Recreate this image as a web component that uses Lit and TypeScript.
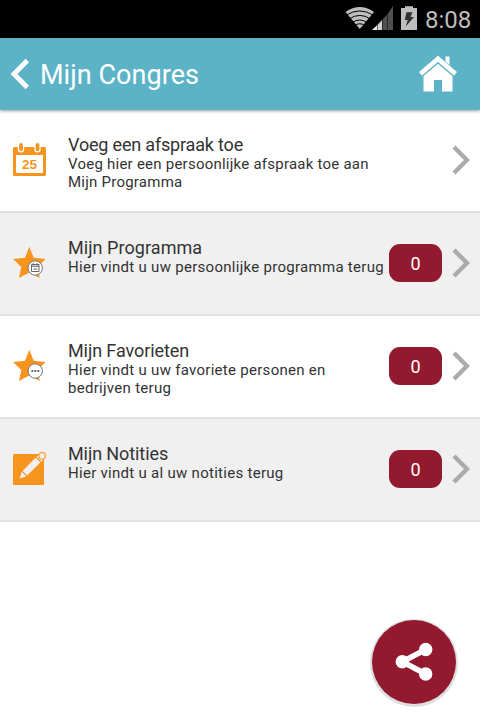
import { LitElement, html, svg, css } from "lit";
import { customElement } from "lit/decorators.js";
import { styleMap } from "lit/directives/style-map.js";

interface Item {
  icon: string;
  title: string;
  text: string;
  titleTracking: number;
  textTracking: number;
  count?: number;
}

const ITEMS: Item[] = [
  { icon: "calendar", title: "Voeg een afspraak toe", text: "Voeg hier een persoonlijke afspraak toe aan Mijn Programma", titleTracking: -0.18, textTracking: 0.235 },
  { icon: "program", title: "Mijn Programma", text: "Hier vindt u uw persoonlijke programma terug", titleTracking: 0.06, textTracking: 0.285, count: 0 },
  { icon: "favorite", title: "Mijn Favorieten", text: "Hier vindt u uw favoriete personen en bedrijven terug", titleTracking: -0.09, textTracking: 0.285, count: 0 },
  { icon: "note", title: "Mijn Notities", text: "Hier vindt u al uw notities terug", titleTracking: -0.09, textTracking: 0.285, count: 0 },
];

const star = svg`<path fill="#f7941e" d="M17.300 .8 21.700 11.700 33.800 13 25.300 21 27.800 32 17.300 26.400 6.900 32 9.300 21 1 13 13.100 11.700Z"/>
  <circle cx="23.200" cy="22" r="7.200" fill="#fff" stroke="#777" stroke-width="1"/>`;

const ICONS: Record<string, unknown> = {
  calendar: svg`<path fill="#f7941e" fill-rule="evenodd" d="M2.500 4H5.800V6.200A3.200 3.200 0 0 0 12.200 6.200V4H22.300V6.200A3.200 3.200 0 0 0 28.700 6.200V4H32.500Q34 4 34 5.500V31.500Q34 33 32.500 33H2.500Q1 33 1 31.500V5.500Q1 4 2.500 4ZM4 12V30H31V12Z"/>
    <path stroke="#f7941e" stroke-width="3.800" stroke-linecap="round" d="M9 1.900V6.200M25.500 1.900V6.200"/>
    <text x="17.500" y="25.500" text-anchor="middle" font-family="Liberation Sans, sans-serif" font-weight="700" font-size="13.500" fill="#f7941e">25</text>`,
  program: svg`${star}
    <path fill="none" stroke="#666" stroke-width="1" d="M19.500 18.500H27V25.500H19.500ZM19.500 20.300H27M21.300 17.200V19.500M25.200 17.200V19.500M21.300 23H25.300"/>`,
  favorite: svg`${star}
    <g fill="#555"><circle cx="20.300" cy="22" r="1.100"/><circle cx="23.300" cy="22" r="1.100"/><circle cx="26.300" cy="22" r="1.100"/></g>`,
  note: svg`<rect x="1" y="2" width="31" height="31" rx="1" fill="#f7941e"/>
    <path fill="#f0f0f0" d="M7.700 26.500 9.700 19.800 14.400 24.500ZM10.500 18.900 23.600 5.800 28.300 10.500 15.200 23.600ZM24.500 5 26.500 3 31.200 7.700 29.200 9.700Z"/>
    <circle cx="30" cy="3.900" r="3.300" fill="#f0f0f0" stroke="#f9a94b" stroke-width="1.500"/>`,
};

@customElement("menu-row")
export class MenuRow extends LitElement {
  static properties = { item: { attribute: false } };
  declare item: Item;

  static styles = css`
    :host {
      display: flex;
      box-sizing: border-box;
      height: 103px;
      border-bottom: 2px solid #e2e2e2;
      background: #fff;
      color: #333;
    }
    :host(:nth-child(even)) { background: #f0f0f0; }
    .icon { flex: none; width: 35px; height: 35px; margin: 33px 21px 0 12px; overflow: visible; }
    .copy { flex: none; width: 321px; padding-top: 24px; }
    .title { font-size: 18px; line-height: 21px; white-space: nowrap; }
    .text { font-size: 15px; line-height: 18px; }
    .badge {
      flex: none; width: 53px; height: 38px; margin-top: 31px;
      border-radius: 11px; background: #93192e; color: #fff;
      font-size: 18px; line-height: 40px; text-align: center;
    }
    .arrow { flex: none; width: 18px; height: 30px; margin: 35px 10px 0 auto; }
  `;

  render() {
    const { icon, title, text, titleTracking, textTracking, count } = this.item;
    return html`
      <svg class="icon" viewBox="0 0 35 35">${ICONS[icon]}</svg>
      <div class="copy">
        <div class="title" style=${styleMap({ letterSpacing: `${titleTracking}px` })}>${title}</div>
        <div class="text" style=${styleMap({ letterSpacing: `${textTracking}px` })}>${text}</div>
      </div>
      ${count === undefined ? "" : html`<div class="badge">${count}</div>`}
      <svg class="arrow" viewBox="0 0 18 30"><path d="M2 2 15 15 2 28" fill="none" stroke="#a9abad" stroke-width="4.400"/></svg>
    `;
  }
}

@customElement("app-root")
export class AppRoot extends LitElement {
  static styles = css`
    :host {
      display: block; position: relative; height: 728px; overflow: hidden;
      background: #fff; font-family: Roboto, sans-serif;
    }
    .status {
      display: flex; box-sizing: border-box; height: 38px; padding-right: 8px;
      justify-content: flex-end; background: #000; color: #bebebe;
    }
    .symbols { width: 74px; height: 38px; }
    .time { width: 47px; margin-left: 7px; font-size: 24px; line-height: 40px; white-space: nowrap; }
    .bar {
      position: relative; z-index: 1;
      display: flex; align-items: center; box-sizing: border-box; height: 72px;
      background: #5cb3c7; color: #fff; box-shadow: 0 1px 3px rgba(0, 0, 0, 0.4);
    }
    .back { width: 20px; height: 32px; margin-left: 10px; }
    .heading { margin: 1px 0 0 10px; font-size: 27px; line-height: 32px; font-weight: 400; letter-spacing: 0.05px; white-space: nowrap; }
    .home { width: 38px; height: 38px; margin: 0 23px 0 auto; }
    .share {
      position: absolute; left: 372px; top: 620px; width: 84px; height: 84px;
      border-radius: 50%; background: #93192e; box-shadow: 0 1px 0 2px #dedede;
    }
    .share svg { display: block; width: 84px; height: 84px; }
  `;

  render() {
    return html`
      <div class="status">
        <svg class="symbols" viewBox="0 0 74 38">
          <path fill="#bebebe" d="M1.500 12Q15.800 2 30 12L15.800 29Z"/>
          <path fill="none" stroke="#000" stroke-width="1" d="M2 15.300Q15.800 6.500 29.500 15.300M5 19Q15.800 11.800 26.500 19M8 22.700Q15.800 17.300 23.500 22.700M10.500 25.500Q15.800 22 21 25.500"/>
          <path fill="#e8e8e8" d="M28 30 33 25.300V30Z"/>
          <path fill="#d0d0d0" d="M33.500 24.800 38 20V30H33.500Z"/>
          <path fill="#505050" d="M38.500 19.500 43 14.700V30H38.500ZM43.500 14.200 49 6V30H43.500Z"/>
          <path fill="#bebebe" d="M57 8H61V6.300H69V8H73V30H57Z"/>
          <path fill="#303030" d="M62.500 12.300H68.500L66.500 17H70L61.500 26.800 63.800 20H60.800Z"/>
        </svg>
        <div class="time">8:08</div>
      </div>
      <header class="bar">
        <svg class="back" viewBox="0 0 20 32"><path d="M17.300 2.500 4 16 17.300 29.500" fill="none" stroke="#fff" stroke-width="4.900"/></svg>
        <h1 class="heading">Mijn Congres</h1>
        <svg class="home" viewBox="0 0 38 38">
          <path d="M1.500 18.800 19 4 36.500 18.800" fill="none" stroke="#fff" stroke-width="4.800"/>
          <path fill="#fff" d="M26.500 1.500H30.500V10L26.500 6.500ZM19 8.700 33.500 21V36.500H23V25H15V36.500H4.500V21Z"/>
          <path d="M3.500 20.800 19 7.700 34.500 20.800" fill="none" stroke="#5cb3c7" stroke-width="1"/>
        </svg>
      </header>
      <nav>${ITEMS.map((item) => html`<menu-row .item=${item}></menu-row>`)}</nav>
      <div class="share">
        <svg viewBox="0 0 84 84">
          <path d="M53.700 29.500 30.300 41.700 53.700 54" fill="none" stroke="#fff" stroke-width="5.500"/>
          <g fill="#fff"><circle cx="53.700" cy="29.500" r="6.700"/><circle cx="30.300" cy="41.700" r="6.700"/><circle cx="53.700" cy="54" r="6.700"/></g>
        </svg>
      </div>
    `;
  }
}
